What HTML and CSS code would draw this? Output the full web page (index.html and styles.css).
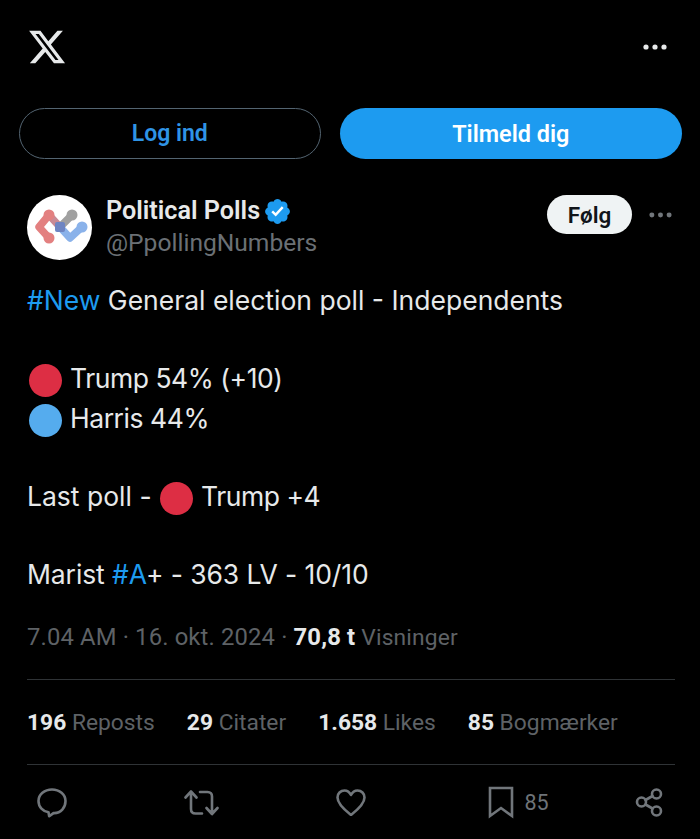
FILE: index.html
```html
<!DOCTYPE html>
<html lang="da">
<head>
<meta charset="utf-8">
<title>Political Polls</title>
<link rel="stylesheet" href="styles.css">
</head>
<body>
<div class="page">
  <header class="top">
    <svg class="logo" viewBox="0 0 24 24"><path d="M18.244 2.25h3.308l-7.227 8.26 8.502 11.24H16.17l-5.214-6.817L4.99 21.75H1.68l7.73-8.835L1.254 2.25H8.08l4.713 6.231zm-1.161 17.52h1.833L7.084 4.126H5.117z"/></svg>
    <svg class="dots" viewBox="0 0 24 6"><circle cx="3" cy="3" r="2.6"/><circle cx="12" cy="3" r="2.6"/><circle cx="21" cy="3" r="2.6"/></svg>
  </header>
  <div class="auth">
    <div class="btn login">Log ind</div>
    <div class="btn signup">Tilmeld dig</div>
  </div>
  <div class="author">
    <div class="avatar">
      <svg viewBox="0 0 65 65">
        <g fill="none" stroke-linecap="round" stroke-linejoin="round" stroke-width="7.500">
          <path d="M22 20 L12 32 L22 43" stroke="#e38080"/>
          <path d="M22 20 L33 32" stroke="#c98a95"/>
          <path d="M45 20 L33 32" stroke="#a0a0a0"/>
          <path d="M33 32 L43 43 L55 32" stroke="#8ab2ea"/>
        </g>
        <circle cx="22" cy="20" r="5.500" fill="#e38080"/>
        <circle cx="22" cy="43" r="5.500" fill="#e38080"/>
        <circle cx="45" cy="20" r="5.500" fill="#a0a0a0"/>
        <circle cx="55" cy="32" r="5.500" fill="#8ab2ea"/>
        <rect x="28" y="27" width="10" height="10" rx="2" fill="#6e85c2"/>
      </svg>
    </div>
    <div class="names">
      <div class="name">Political Polls
        <svg class="badge" viewBox="0 0 24 24"><path fill="#1d9bf0" d="M22.25 12c0-1.43-.88-2.67-2.19-3.34.46-1.39.2-2.9-.81-3.91s-2.52-1.27-3.91-.81c-.66-1.31-1.91-2.19-3.34-2.19s-2.67.88-3.33 2.19c-1.4-.46-2.91-.2-3.92.81s-1.26 2.52-.8 3.91c-1.31.67-2.2 1.91-2.2 3.34s.89 2.67 2.2 3.34c-.46 1.39-.21 2.9.8 3.91s2.52 1.26 3.91.81c.67 1.31 1.91 2.19 3.34 2.19s2.68-.88 3.34-2.19c1.39.45 2.9.2 3.91-.81s1.27-2.52.81-3.91c1.31-.67 2.19-1.91 2.19-3.34z"/><path fill="#fff" d="M10.54 16.2l-3.64-3.64 1.41-1.42 2.14 2.15 5.14-5.6 1.47 1.36z"/></svg>
      </div>
      <div class="handle">@PpollingNumbers</div>
    </div>
    <div class="follow">Følg</div>
    <svg class="dots small" viewBox="0 0 24 6"><circle cx="3" cy="3" r="2.6"/><circle cx="12" cy="3" r="2.6"/><circle cx="21" cy="3" r="2.6"/></svg>
  </div>
  <div class="tweet">
    <p><span class="tag">#New</span> General election poll - Independents</p>
    <p class="blank"></p>
    <p class="tight"><span class="dot red"></span>Trump 54% (+10)</p>
    <p class="tight"><span class="dot blue"></span>Harris 44%</p>
    <p class="blank"></p>
    <p>Last poll - <span class="dot inline red"></span><span class="tight">Trump +4</span></p>
    <p class="blank"></p>
    <p class="snug">Marist <span class="tag">#A</span>+ - 363 LV - 10/10</p>
  </div>
  <div class="meta">7.04 AM · 16. okt. 2024 · <b>70,8 t</b> <span class="views">Visninger</span></div>
  <div class="stats">
    <span><b>196</b> Reposts</span>
    <span><b>29</b> Citater</span>
    <span><b>1.658</b> Likes</span>
    <span><b>85</b> Bogmærker</span>
  </div>
  <div class="actions">
    <div class="cell"><svg class="act reply" viewBox="0 0 30 32"><path d="M15 3.500C7.500 3.500 1.500 8.500 1.500 15c0 6 4.500 10.500 10 11.300l.7 4 4.300-3.200C24 27.500 28.500 21.500 28.500 15 28.500 8.500 22.500 3.500 15 3.500z"/></svg></div>
    <div class="cell"><svg class="act retweet" viewBox="0 0 35 28"><path d="M1.500 9.500L7 3.500l5.500 6M7 4v17c0 3 1.500 4.500 4.500 4.500H18M33.500 20L28 26l-5.500-6M28 25.500V8.500c0-3-1.500-4.500-4.500-4.500H16"/></svg></div>
    <div class="cell"><svg class="act heart" viewBox="0 0 30 28"><path d="M15 27C10 23 1.500 16.500 1.500 9.500 1.500 5.500 4.500 2.500 8.500 2.500c3 0 5 1.500 6.500 4.500 1.500-3 3.500-4.500 6.500-4.500 4 0 7 3 7 7 0 7-8.500 13.500-13.500 17.500z"/></svg></div>
    <div class="cell bm"><svg class="act mark" viewBox="0 0 26 33"><path d="M2 2h22v28l-11-8-11 8z"/></svg><span>85</span></div>
    <div class="cell"><svg class="act share" viewBox="0 0 30 32"><circle cx="21.500" cy="8" r="4.500"/><circle cx="6.500" cy="16" r="4.500"/><circle cx="21.500" cy="25" r="4.500"/><path d="M10.500 14l7-4M10.500 18.500l7 4"/></svg></div>
  </div>
</div>
</body>
</html>
```
FILE: styles.css
```css
* { box-sizing: border-box; }
html, body { margin: 0; padding: 0; background: #000; }
body { font-family: Roboto, "Liberation Sans", sans-serif; color: #e7e9ea; width: 700px; height: 839px; overflow: hidden; }
.page { padding: 0 25px 0 27px; }
.top { display: flex; justify-content: space-between; padding-top: 27px; height: 108px; align-items: flex-start; }
.logo { width: 42px; height: 40px; margin-left: -1px; fill: #e7e9ea; }
.dots { width: 24px; height: 6px; fill: #e7e9ea; margin-top: 17px; margin-right: 8px; }
.auth { display: flex; gap: 19px; margin: 0 -7px 0 -8px; }
.btn { height: 51px; border-radius: 26px; display: flex; align-items: center; justify-content: center; font-size: 23px; font-weight: 600; }
.login { width: 302px; border: 1px solid #536471; color: #2f94e6; }
.signup { width: 343px; background: #1d9bf0; color: #fff; font-size: 23.400px; }
.author { display: flex; align-items: flex-start; margin-top: 36px; height: 66px; }
.avatar { width: 65px; height: 65px; border-radius: 50%; background: #fff; flex: none; }
.avatar svg { width: 65px; height: 65px; display: block; }
.names { margin-left: 14px; flex: 1; }
.name { font-size: 25.200px; font-weight: 600; line-height: 32px; display: flex; align-items: center; gap: 3px; color: #e7e9ea; }
.badge { width: 29px; height: 29px; }
.handle { font-size: 24.600px; line-height: 32px; color: #6b7075; }
.follow { width: 85px; height: 39px; border-radius: 20px; background: #eff3f4; color: #0f1419; font-size: 22.500px; font-weight: 600; display: flex; align-items: center; justify-content: center; }
.dots.small { width: 23px; height: 6px; fill: #71767b; margin: 17px 3px 0 17px; }
.tweet { margin-top: 20px; font-family: Inter, Roboto, sans-serif; font-size: 26.500px; line-height: 39.200px; color: #e7e9ea; }
.tweet p { margin: 0; height: 39.200px; white-space: nowrap; }
.tight { letter-spacing: -.45px; }
.snug { letter-spacing: -.1px; }
.tag { color: #1d9bf0; }
.dot { display: inline-block; width: 33px; height: 33px; border-radius: 50%; vertical-align: -9px; margin: 0 8px 0 2px; }
.dot.inline { margin: 0 8px 0 1px; }
.red { background: #dd2e44; }
.blue { background: #55acee; }
.meta { margin-top: 26px; font-size: 23.800px; line-height: 32px; color: #5e6266; letter-spacing: .15px; }
.views { font-size: 22.800px; }
.meta b, .stats b { color: #e7e9ea; font-weight: 700; }
.stats { margin-top: 25px; border-top: 1px solid #2f3336; border-bottom: 1px solid #2f3336; height: 86px; display: flex; align-items: center; gap: 32px; font-size: 22.800px; color: #5e6266; padding-top: 1px; }
.actions { display: grid; grid-template-columns: repeat(5, 30px); column-gap: 119.500px; align-items: center; padding: 21px 0 0 10px; }
.cell { display: flex; justify-content: center; align-items: center; }
.bm { justify-content: flex-start; gap: 11px; padding-left: 2px; font-size: 21.500px; color: #6e7378; }
.act { fill: none; stroke: #71767b; stroke-width: 2.600; stroke-linejoin: round; stroke-linecap: round; flex: none; }
.reply { width: 30px; height: 32px; }
.retweet { width: 35px; height: 28px; }
.heart { width: 30px; height: 28px; }
.mark { width: 26px; height: 33px; stroke-linejoin: miter; }
.share { width: 30px; height: 32px; }
```
